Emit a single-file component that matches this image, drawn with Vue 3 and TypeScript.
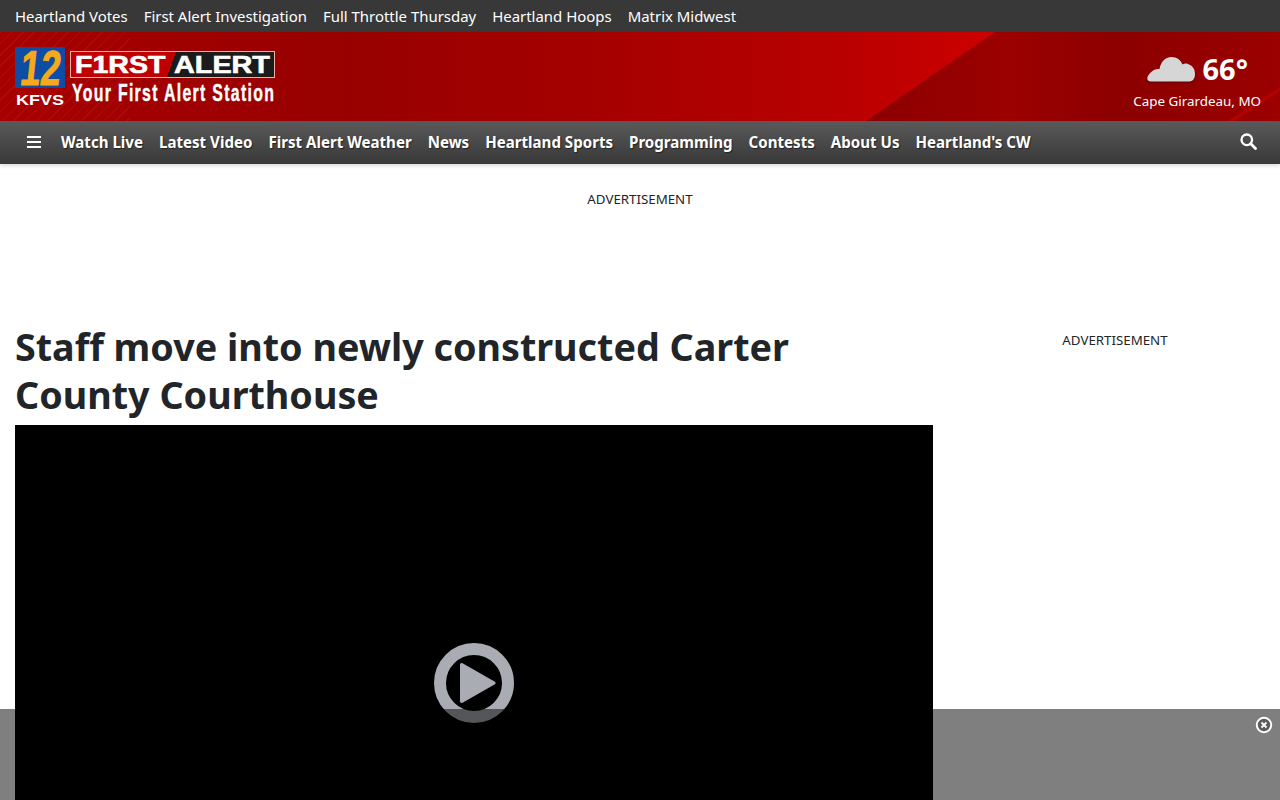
<template>
  <div class="page">
    <div class="top-bar">
      <a v-for="link in topLinks" :key="link" class="top-link">{{ link }}</a>
    </div>

    <header class="masthead">
      <svg class="logo" width="262" height="60" viewBox="0 0 262 60" role="img" aria-label="KFVS 12 First Alert">
        <rect x="0" y="0" width="50" height="41" fill="#0e4da4" />
        <text transform="translate(4 38) skewX(-6) scale(.74 1)" class="logo-num">12</text>
        <text transform="translate(1 58) scale(1.2 1)" class="logo-kfvs">KFVS</text>
        <rect x="55.5" y="4.5" width="204" height="26" fill="#c00000" stroke="#e9b3a6" />
        <polygon points="161,5 259,5 259,30 152,30" fill="#1b1b1b" />
        <text transform="translate(60 26) scale(1.19 1)" class="logo-alert">F1RST</text>
        <text transform="translate(159 26) scale(1.2 1)" class="logo-alert">ALERT</text>
        <text transform="translate(57 54) scale(.66 1)" class="logo-tag" textLength="306" lengthAdjust="spacing">Your First Alert Station</text>
      </svg>
      <div class="weather">
        <div class="weather-now">
          <svg class="cloud" width="48" height="26" viewBox="0 0 48 26" aria-hidden="true">
            <path
              d="M4 25.5C1.500 25.500 0 24 0.300 22C0.800 19 4 15.500 8 13.500C9.500 12.800 11 12.800 12.500 13C13.500 6.500 18 1 24.500 1C30 1 33.800 4 35.500 8.500C37 7.500 39 7.300 41 8C45.500 9.500 48 13 48 18C48 23 45.500 25.500 42 25.500Z"
              fill="#d6d6d6"
            />
          </svg>
          <span class="temp">66°</span>
        </div>
        <div class="location">Cape Girardeau, MO</div>
      </div>
    </header>

    <nav class="main-nav">
      <svg class="burger" width="14" height="12" viewBox="0 0 14 12" aria-hidden="true">
        <path d="M0 1h14M0 6h14M0 11h14" stroke="#fff" stroke-width="1.800" />
      </svg>
      <a v-for="item in navItems" :key="item" class="nav-link">{{ item }}</a>
      <svg class="search" width="17" height="17" viewBox="0 0 17 17" aria-hidden="true">
        <circle cx="6.800" cy="6.800" r="5.300" fill="none" stroke="#fff" stroke-width="2.300" />
        <path d="M10.800 10.800L15.500 15.500" stroke="#fff" stroke-width="2.800" stroke-linecap="round" />
      </svg>
    </nav>

    <div class="ad-top">ADVERTISEMENT</div>

    <main class="content">
      <article class="story">
        <h1 class="headline">Staff move into newly constructed Carter County Courthouse</h1>
        <div class="video">
          <svg class="play" width="80" height="80" viewBox="0 0 80 80" aria-label="Play">
            <circle cx="40" cy="40" r="34" fill="none" stroke="#a9adb3" stroke-width="12" />
            <path
              d="M29 20.500C27.500 19.600 26 20.300 26 22V58C26 59.700 27.500 60.400 29 59.500L60.500 41.500C62 40.700 62 39.300 60.500 38.500Z"
              fill="#a9adb3"
            />
          </svg>
        </div>
      </article>
      <aside class="sidebar">ADVERTISEMENT</aside>
    </main>

    <div class="sticky-ad">
      <svg class="close" width="18" height="18" viewBox="0 0 18 18" aria-label="Close">
        <circle cx="9" cy="9" r="7.200" fill="#5c5c5c" stroke="#fff" stroke-width="2" />
        <path d="M6.500 6.500L11.500 11.500M11.500 6.500L6.500 11.500" stroke="#fff" stroke-width="1.800" />
      </svg>
    </div>
  </div>
</template>

<script setup lang="ts">
const topLinks: string[] = [
  'Heartland Votes',
  'First Alert Investigation',
  'Full Throttle Thursday',
  'Heartland Hoops',
  'Matrix Midwest'
]

const navItems: string[] = [
  'Watch Live',
  'Latest Video',
  'First Alert Weather',
  'News',
  'Heartland Sports',
  'Programming',
  'Contests',
  'About Us',
  "Heartland's CW"
]
</script>

<style>
html,
body {
  overflow: hidden;
  background: #fff;
}
</style>

<style scoped>
.page {
  height: 800px;
  overflow: hidden;
  font-family: "Noto Sans", "Open Sans", sans-serif;
  color: #212529;
}

/* Top links */
.top-bar {
  display: flex;
  align-items: center;
  gap: 16px;
  height: 32px;
  padding: 0 15px;
  background: #383838;
}

.top-link {
  font-size: 14.950px;
  color: #fff;
}

/* Red header */
.masthead {
  position: relative;
  display: flex;
  justify-content: space-between;
  height: 89px;
  padding: 0 19px 0 15px;
  overflow: hidden;
  background: linear-gradient(90deg, #8c0000 860px, #9c0000 1010px, #8c0000 1120px, #9c0000 1280px);
}

.masthead::before {
  content: "";
  position: absolute;
  inset: 0;
  background:
    repeating-linear-gradient(135deg, rgba(255, 255, 255, 0.05) 0 1px, transparent 1px 8px) 0 0 / 130px 100% no-repeat,
    linear-gradient(90deg, #a80000 0, #980000 350px, #a60000 600px, #b80000 830px, #cc0000 990px);
  clip-path: polygon(0 0, 995px 0, 866px 100%, 0 100%);
}

/* light streak in the bottom right corner */
.masthead::after {
  content: "";
  position: absolute;
  inset: 0;
  background: rgba(210, 0, 0, 0.55);
  clip-path: polygon(1234px 100%, 1280px 66%, 1280px 62%, 1228px 100%);
}

.logo {
  position: relative;
  margin-top: 15px;
}

.logo-num {
  font: 700 49px "Liberation Sans", sans-serif;
  fill: #f7a81b;
  stroke: #f7a81b;
  stroke-width: 1px;
}

.logo-kfvs {
  font: 700 15px "Liberation Sans", sans-serif;
  fill: #fff;
}

.logo-alert {
  font: 700 24px "Liberation Sans", sans-serif;
  fill: #fff;
  stroke: #fff;
  stroke-width: 0.6px;
}

.logo-tag {
  font: 700 24px "Liberation Sans", sans-serif;
  fill: #fff;
  stroke: #fff;
  stroke-width: 0.4px;
}

.weather {
  position: relative;
  z-index: 1;
  display: flex;
  flex-direction: column;
  align-items: flex-end;
  padding-top: 17px;
}

.weather-now {
  display: flex;
  align-items: center;
  gap: 8px;
  margin-right: 13px;
  height: 38px;
}

.cloud {
  margin-top: 2px;
  filter: drop-shadow(0 1px 1px rgba(0, 0, 0, 0.4));
}

.temp {
  font-size: 29px;
  font-weight: 700;
  color: #fff;
}

.location {
  margin-top: 5px;
  font-size: 13.400px;
  color: #fff;
}

/* Main nav */
.main-nav {
  position: relative;
  display: flex;
  align-items: center;
  gap: 16px;
  height: 43px;
  padding: 0 23px 2px 27px;
  box-sizing: border-box;
  background: linear-gradient(180deg, #5a5a5a, #383838);
  box-shadow: 0 2px 4px rgba(0, 0, 0, 0.15);
}

.burger {
  margin-right: 4px;
}

.nav-link {
  font-size: 15.100px;
  font-weight: 700;
  color: #fff;
  text-shadow: 1px 1px 1px rgba(0, 0, 0, 0.5);
}

.search {
  margin-left: auto;
}

/* Ads */
.ad-top {
  height: 159px;
  padding-top: 26px;
  box-sizing: border-box;
  font-size: 13.300px;
  line-height: 19px;
  text-align: center;
}

.content {
  display: grid;
  grid-template-columns: 933px 1fr;
  gap: 17px;
}

.story {
  padding-left: 15px;
}

.headline {
  max-width: 800px;
  margin: 0 0 6px;
  font-size: 37.700px;
  font-weight: 700;
  line-height: 48px;
  color: #212529;
}

.video {
  display: flex;
  align-items: center;
  justify-content: center;
  height: 516px;
  background: #000;
}

.sidebar {
  padding-top: 8px;
  font-size: 13.300px;
  line-height: 19px;
  text-align: center;
}

/* Sticky ad over the page */
.sticky-ad {
  position: fixed;
  left: 0;
  right: 0;
  top: 709px;
  height: 91px;
  background: rgba(0, 0, 0, 0.5);
}

.close {
  position: absolute;
  top: 7px;
  right: 7px;
}
</style>
